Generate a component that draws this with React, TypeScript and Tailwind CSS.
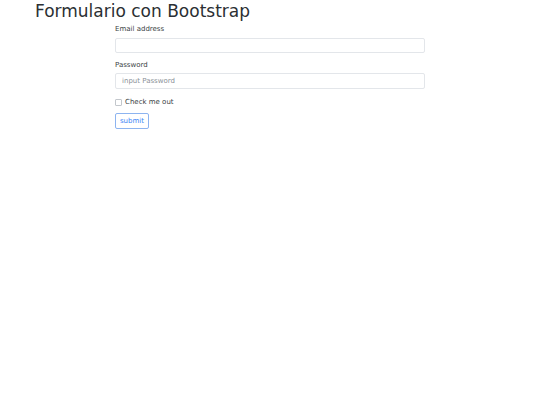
export default function App() {
  return (
    <div className="min-h-screen bg-white text-[#212529] font-['DejaVu_Sans',sans-serif]">
      <h1 className="pl-[35px] text-[17px] leading-[22px] font-normal text-[#2b2f33]">Formulario con Bootstrap</h1>

      <form className="mx-auto w-[310px] pt-[2px]">
        <div className="mb-[7px]">
          <label className="block text-[7px] leading-[10px] mb-[4px] text-[#3a3f44]">Email address</label>
          <input
            type="email"
            className="block w-full h-[15px] rounded-[2px] border border-[#e3e6ea] px-[6px] text-[7px] outline-none"
          />
        </div>

        <div className="mb-[8px]">
          <label className="block text-[7px] leading-[10px] mb-[3px] text-[#3a3f44]">Password</label>
          <input
            type="password"
            placeholder="input Password"
            className="block w-full h-[16px] rounded-[2px] border border-[#e3e6ea] px-[6px] text-[7px] outline-none placeholder:text-[#8a9097]"
          />
        </div>

        <div className="flex items-center gap-[3px] mb-[6px]">
          <span className="block w-[7px] h-[7px] rounded-[1px] border border-[#c3c7cc] bg-white" />
          <span className="text-[7px] leading-[10px] text-[#3a3f44]">Check me out</span>
        </div>

        <button
          type="button"
          className="block h-[16px] w-[34px] rounded-[2px] border border-[#8db4f0] text-[7px] leading-[14px] text-[#3d85f5] bg-white"
        >
          submit
        </button>
      </form>
    </div>
  );
}
